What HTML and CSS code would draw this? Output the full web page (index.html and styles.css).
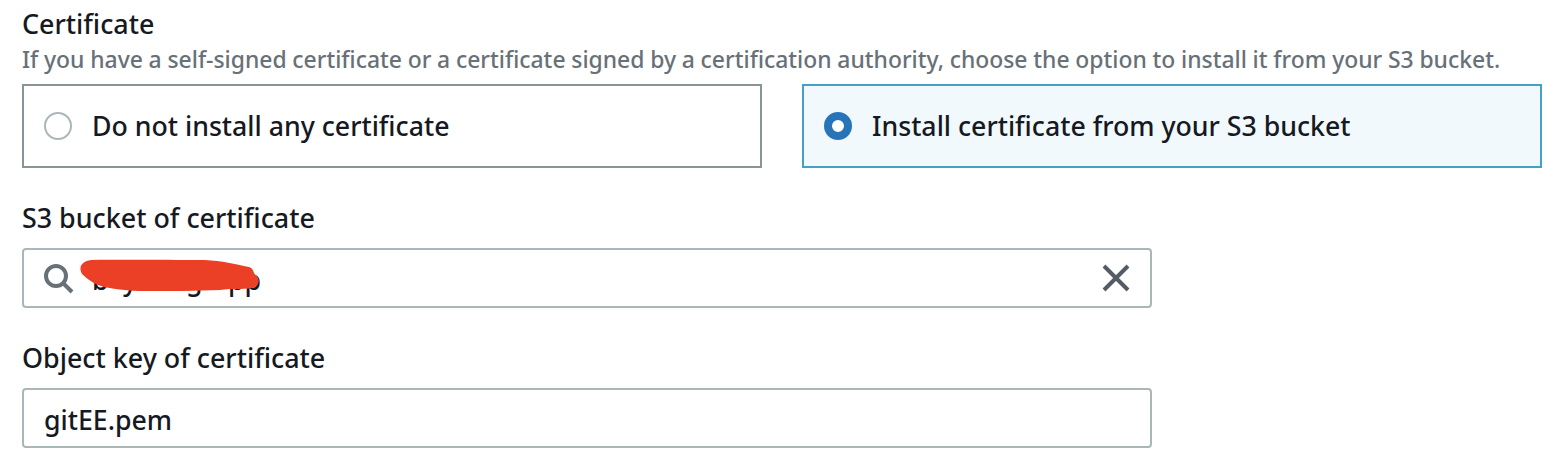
FILE: index.html
```
<!DOCTYPE html>
<html lang="en">
<head>
<meta charset="utf-8">
<title>Certificate</title>
<link rel="stylesheet" href="styles.css">
</head>
<body>
<main class="form">
  <section class="group">
    <h2 class="label">Certificate</h2>
    <p class="hint">If you have a self-signed certificate or a certificate signed by a certification authority, choose the option to install it from your S3 bucket.</p>
    <div class="tiles">
      <div class="tile">
        <span class="radio"></span>
        <span>Do not install any certificate</span>
      </div>
      <div class="tile selected">
        <span class="radio"></span>
        <span>Install certificate from your S3 bucket</span>
      </div>
    </div>
  </section>
  <section class="group field">
    <h2 class="label">S3 bucket of certificate</h2>
    <div class="input search">
      <svg class="icon-search" width="32" height="32" viewBox="0 0 32 32" fill="none" stroke="#687078" stroke-width="4"><circle cx="14" cy="14" r="10"/><path d="M21 21L30 30"/></svg>
      <div class="value"><span class="l-b">b</span><span class="l-y">y</span><span class="l-g">g</span><span class="l-p">pp</span>
        <svg class="redaction" width="182" height="34" viewBox="0 0 182 34"><path fill="#eb4026" d="M12 1C45 0.5 92 1 126 1C143 2 156 5 170 8C176 10 173 14 178 17C181 21 180 26 176 28C168 31 153 29 141 31C118 32 92 32 66 32C49 32 36 30 25 28C15 25 8 20 3 15C-1 8 3 2 12 1Z"/></svg>
      </div>
      <svg class="icon-close" width="28" height="28" viewBox="0 0 28 28" fill="none" stroke="#545b64" stroke-width="4"><path d="M2 2L26 26M26 2L2 26"/></svg>
    </div>
  </section>
  <section class="group field">
    <h2 class="label">Object key of certificate</h2>
    <div class="input">gitEE.pem</div>
  </section>
</main>
</body>
</html>
```
FILE: styles.css
```
* { box-sizing: border-box; }
body {
  margin: 0;
  background: #fff;
  color: #16191f;
  font-family: "Noto Sans", sans-serif;
  font-size: 26.7px;
  font-weight: 500;
  line-height: 40px;
  white-space: nowrap;
}
.form { padding: 4px 14px 0 22px; }
.label, .hint { margin: 0; font-weight: 500; }
.label { font-size: 26.85px; height: 40px; }
.hint {
  font-size: 22.9px;
  line-height: 32px;
  height: 40px;
  color: #687078;
  word-spacing: -0.2px;
}
.tiles { display: grid; grid-template-columns: 740px 740px; gap: 40px; }
.tile {
  display: flex;
  align-items: center;
  gap: 20px;
  height: 84px;
  padding: 0 20px;
  border: 2px solid #879596;
}
.tile.selected { border-color: #44a0c8; background: #f2f9fd; }
.radio {
  width: 28px;
  height: 28px;
  border: 2px solid #aab7b8;
  border-radius: 50%;
  background: #fff;
}
.selected .radio { border: 8px solid #2874b8; }
.field { width: 1130px; padding-top: 30px; }
.field .label { height: 50px; }
.input {
  display: flex;
  align-items: center;
  height: 60px;
  padding: 4px 20px 0;
  border: 2px solid #aab7b8;
  border-radius: 4px;
}
.search { padding: 0 20px 0 18px; }
.icon-search { margin-right: 16px; }
.icon-close { margin-left: auto; }
.value { position: relative; display: flex; height: 40px; padding-left: 2px; margin-top: 4px; }
.redaction { position: absolute; left: -11px; top: -1px; }
.l-b { width: 31px; }
.l-y { width: 63px; }
.l-g { width: 42px; }
```
